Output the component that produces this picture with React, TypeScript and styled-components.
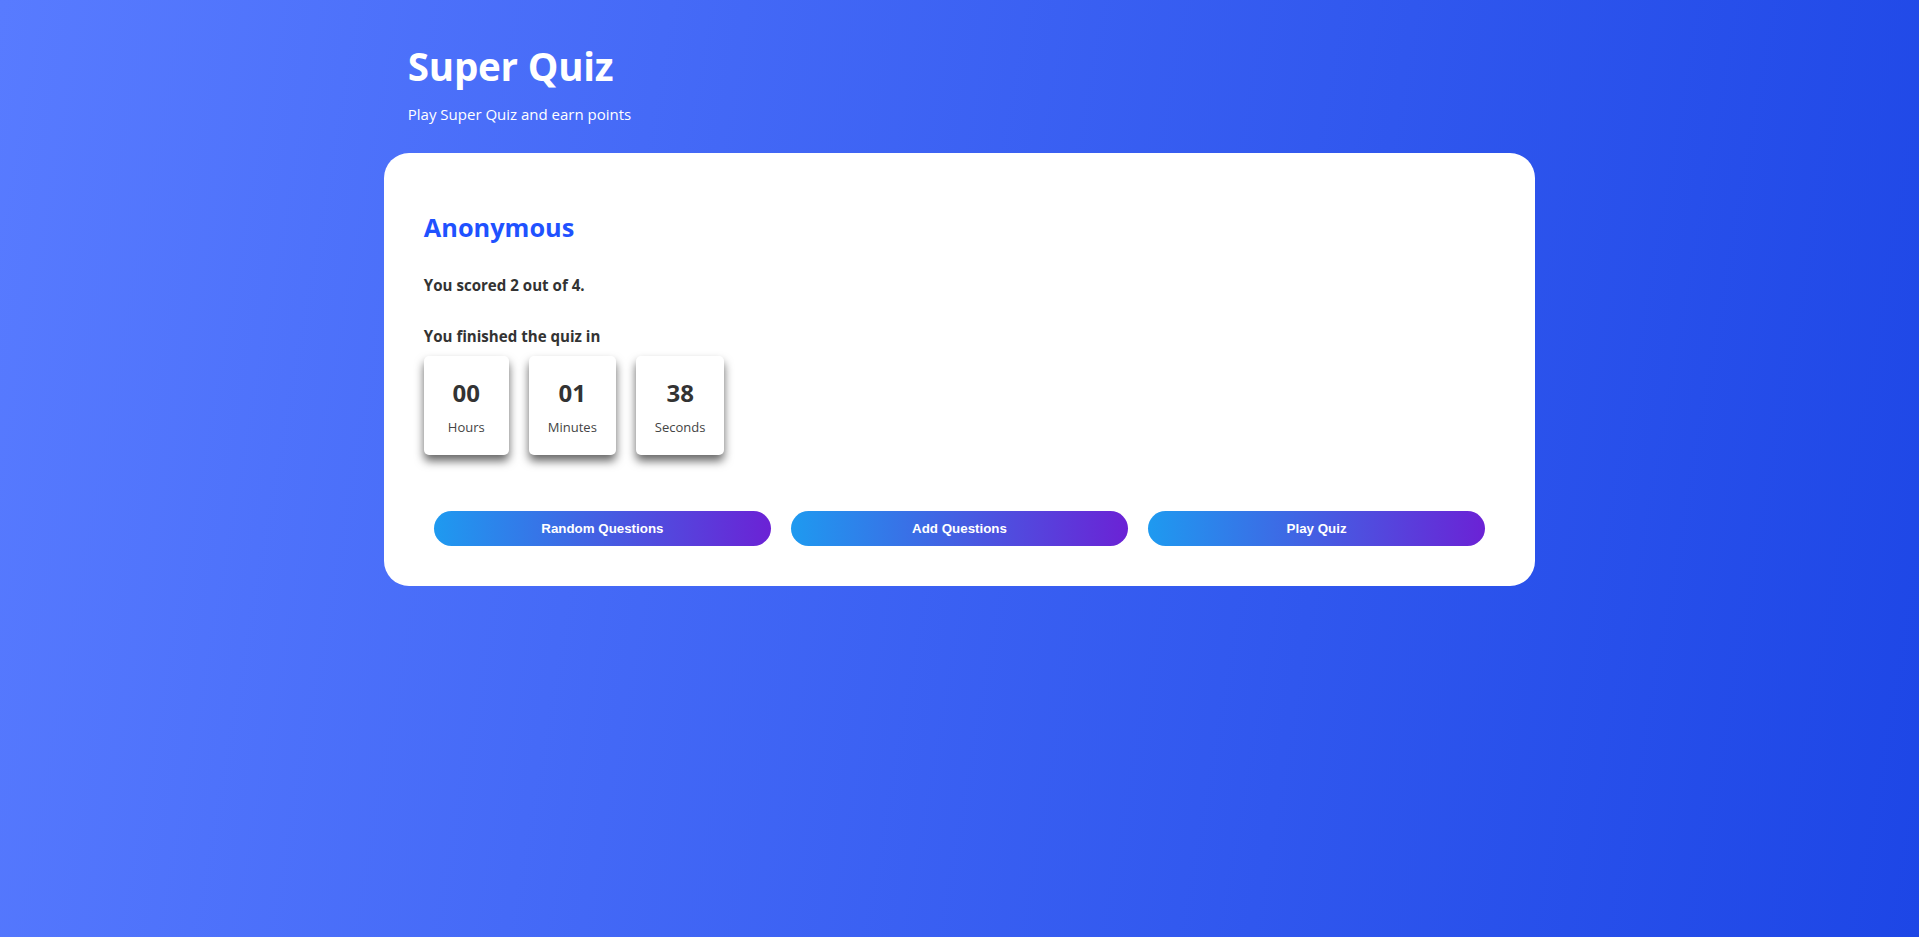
import React from "react";
import styled, { createGlobalStyle } from "styled-components";

const GlobalStyle = createGlobalStyle`
  html, body {
    margin: 0;
    padding: 0;
  }
  body {
    font-family: "Open Sans", "Noto Sans", sans-serif;
    background: linear-gradient(100deg, #587bff 0%, #1d46e6 100%);
    min-height: 100vh;
    color: #333;
  }
`;

const Page = styled.div`
  min-height: 100vh;
  padding-top: 42px;
  box-sizing: border-box;
`;

const Container = styled.div`
  width: 60%;
  margin: 0 auto;
`;

const Header = styled.header`
  padding: 0 24px;
  color: #fff;
`;

const Title = styled.h1`
  margin: 0;
  font-size: 38.5px;
  line-height: 48px;
  font-weight: 700;
  letter-spacing: -0.2px;
`;

const Subtitle = styled.p`
  margin: 12px 0 0;
  font-size: 15px;
  line-height: 24px;
`;

const Card = styled.main`
  margin-top: 27px;
  background: #fff;
  border-radius: 25px;
  padding: 58px 40px 40px;
`;

const Name = styled.h2`
  margin: 0;
  font-size: 25.3px;
  line-height: 32px;
  font-weight: 700;
  color: #1f52ff;
`;

const Line = styled.p<{ $gap: number }>`
  margin: ${(p) => p.$gap}px 0 0;
  font-size: 15.1px;
  line-height: 20px;
  font-weight: 700;
  color: #333;
`;

const Timer = styled.div`
  display: flex;
  gap: 20px;
  margin-top: 10px;
`;

const TimeBox = styled.div`
  min-width: 85px;
  box-sizing: border-box;
  height: 99px;
  padding: 22px 19px 0;
  background: #fff;
  border-radius: 5px;
  box-shadow: 0 6px 10px rgba(0, 0, 0, 0.6);
  display: flex;
  flex-direction: column;
  align-items: center;
`;

const TimeValue = styled.span`
  font-size: 24px;
  line-height: 30px;
  font-weight: 700;
  color: #333;
`;

const TimeLabel = styled.span`
  margin-top: 10px;
  font-size: 13px;
  line-height: 18px;
  color: #444;
`;

const Actions = styled.div`
  display: flex;
  gap: 20px;
  padding: 0 10px;
  margin-top: 56px;
`;

const ActionButton = styled.button`
  flex: 1;
  height: 35px;
  border: none;
  border-radius: 18px;
  background: linear-gradient(to right, #1e9af0 0%, #6b22d5 100%);
  color: #fff;
  font-family: "Liberation Sans", Arial, sans-serif;
  font-size: 13.333px;
  font-weight: 700;
  cursor: pointer;
`;

const times = [
  { value: "00", label: "Hours" },
  { value: "01", label: "Minutes" },
  { value: "38", label: "Seconds" },
];

const actions = ["Random Questions", "Add Questions", "Play Quiz"];

export default function App() {
  return (
    <>
      <GlobalStyle />
      <Page>
        <Container>
          <Header>
            <Title>Super Quiz</Title>
            <Subtitle>Play Super Quiz and earn points</Subtitle>
          </Header>
          <Card>
            <Name>Anonymous</Name>
            <Line $gap={32}>You scored 2 out of 4.</Line>
            <Line $gap={31}>You finished the quiz in</Line>
            <Timer>
              {times.map((t) => (
                <TimeBox key={t.label}>
                  <TimeValue>{t.value}</TimeValue>
                  <TimeLabel>{t.label}</TimeLabel>
                </TimeBox>
              ))}
            </Timer>
            <Actions>
              {actions.map((a) => (
                <ActionButton key={a}>{a}</ActionButton>
              ))}
            </Actions>
          </Card>
        </Container>
      </Page>
    </>
  );
}
